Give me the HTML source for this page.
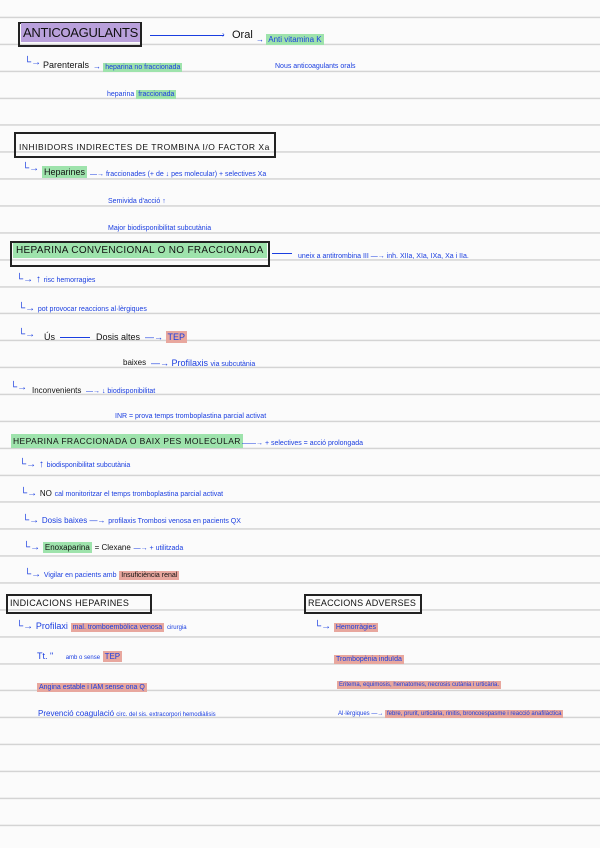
<!DOCTYPE html>
<html><head><meta charset="utf-8"><style>
body{margin:0;width:600px;height:848px;position:relative;overflow:hidden;background:#fbfbfb;
background-image:repeating-linear-gradient(to bottom,transparent 0,transparent 16px,#d4d4d4 16px,#d4d4d4 17.5px,transparent 17.5px,transparent 26.93px);
background-position:0 0.7px;font-family:"Liberation Sans",sans-serif}
.t{position:absolute;white-space:nowrap;line-height:1}
.b{color:#1a3ee0;font-size:8px}
.k{color:#111}
.g{background:#9ee3ac;padding:1px 2px}
.p{background:#b9a0db;padding:1px 2px}
.r{background:#e8a79e;padding:1px 2px}
.box{position:absolute;border:2px solid #222}
.ln{position:absolute;height:1px;background:#1a3ee0}
</style></head><body>

<div class="box" style="left:18px;top:22px;width:120px;height:21px"></div>
<div class="t k" style="left:21px;top:26px;font-size:13px;letter-spacing:-0.3px"><span class="p" style="padding:2px 2px">ANTICOAGULANTS</span></div>
<div class="ln" style="left:150px;top:35px;width:74px"></div><div class="t b" style="left:222px;top:31px">›</div>
<div class="t k" style="left:232px;top:30px;font-size:11px">Oral</div>
<div class="t b" style="left:256px;top:36px">→ <span class="g">Anti vitamina K</span></div>
<div class="t b" style="left:24px;top:58px;font-size:10px">└→</div>
<div class="t k" style="left:43px;top:61px;font-size:9px">Parenterals</div>
<div class="t b" style="left:93px;top:63px">→ <span class="g" style="font-size:7px">heparina no fraccionada</span></div>
<div class="t b" style="left:275px;top:63px;font-size:7px">Nous anticoagulants orals</div>
<div class="t b" style="left:107px;top:91px;font-size:7px">heparina <span class="g">fraccionada</span></div>

<div class="box" style="left:14px;top:132px;width:258px;height:22px"></div>
<div class="t k" style="left:19px;top:143px;font-size:8.5px;letter-spacing:0.5px">INHIBIDORS INDIRECTES DE TROMBINA I/O FACTOR Xa</div>
<div class="t b" style="left:22px;top:164px;font-size:10px">└→</div>
<div class="t k" style="left:42px;top:168px;font-size:9px"><span class="g">Heparines</span></div>
<div class="t b" style="left:90px;top:171px;font-size:7px">—→ fraccionades (+ de ↓ pes molecular) + selectives Xa</div>
<div class="t b" style="left:108px;top:198px;font-size:7px">Semivida d'acció ↑</div>
<div class="t b" style="left:108px;top:225px;font-size:7px">Major biodisponibilitat subcutània</div>

<div class="box" style="left:10px;top:241px;width:256px;height:22px"></div>
<div class="t k" style="left:13px;top:246px;font-size:10px;letter-spacing:0.3px"><span class="g" style="padding:2px 3px">HEPARINA CONVENCIONAL O NO FRACCIONADA</span></div>
<div class="ln" style="left:272px;top:253px;width:20px"></div>
<div class="t b" style="left:298px;top:253px;font-size:7px">uneix a antitrombina III —→ inh. XIIa, XIa, IXa, Xa i IIa.</div>
<div class="t b" style="left:16px;top:275px;font-size:10px">└→ ↑ <span style="font-size:7px">risc hemorragies</span></div>
<div class="t b" style="left:18px;top:304px;font-size:10px">└→ <span style="font-size:7px">pot provocar reaccions al·lèrgiques</span></div>
<div class="t b" style="left:18px;top:330px;font-size:10px">└→</div>
<div class="t k" style="left:44px;top:333px;font-size:9px">Ús</div>
<div class="ln" style="left:60px;top:337px;width:30px"></div>
<div class="t k" style="left:96px;top:333px;font-size:9px">Dosis altes</div>
<div class="t b" style="left:145px;top:333px;font-size:9px">—→ <span class="r">TEP</span></div>
<div class="t k" style="left:123px;top:359px;font-size:8px">baixes</div>
<div class="t b" style="left:151px;top:359px;font-size:9px">—→ Profilaxis <span style="font-size:7px">via subcutània</span></div>
<div class="t b" style="left:10px;top:383px;font-size:10px">└→</div>
<div class="t k" style="left:32px;top:387px;font-size:8px">Inconvenients</div>
<div class="t b" style="left:86px;top:388px;font-size:7px">—→ ↓ biodisponibilitat</div>
<div class="t b" style="left:115px;top:413px;font-size:7px">INR = prova temps tromboplastina parcial activat</div>

<div class="t k" style="left:11px;top:437px;font-size:8.5px;letter-spacing:0.4px"><span class="g" style="padding:2px 2px">HEPARINA FRACCIONADA O BAIX PES MOLECULAR</span></div>
<div class="t b" style="left:242px;top:440px;font-size:7px">——→ + selectives = acció prolongada</div>
<div class="t b" style="left:19px;top:460px;font-size:10px">└→ ↑ <span style="font-size:7px">biodisponibilitat subcutània</span></div>
<div class="t b" style="left:20px;top:489px;font-size:10px">└→ <span class="k" style="font-size:8px">NO</span> <span style="font-size:7px">cal monitoritzar el temps tromboplastina parcial activat</span></div>
<div class="t b" style="left:22px;top:516px;font-size:10px">└→ <span style="font-size:8px">Dosis baixes —→</span> <span style="font-size:7px">profilaxis Trombosi venosa en pacients QX</span></div>
<div class="t b" style="left:23px;top:543px;font-size:10px">└→ <span class="g k" style="font-size:8px">Enoxaparina</span> <span class="k" style="font-size:8px">= Clexane</span> <span style="font-size:7px">—→ + utilitzada</span></div>
<div class="t b" style="left:24px;top:570px;font-size:10px">└→ <span style="font-size:7px">Vigilar en pacients amb</span> <span class="r k" style="font-size:7px">Insuficiència renal</span></div>

<div class="box" style="left:6px;top:594px;width:142px;height:16px"></div>
<div class="t k" style="left:10px;top:599px;font-size:9px;letter-spacing:0.3px">INDICACIONS HEPARINES</div>
<div class="t b" style="left:16px;top:622px;font-size:10px">└→ <span style="font-size:9px">Profilaxi</span> <span class="r" style="font-size:7px">mal. tromboembòlica venosa</span> <span style="font-size:6px">cirurgia</span></div>
<div class="t b" style="left:37px;top:652px;font-size:9px">Tt. " <span style="font-size:6px">&nbsp;&nbsp;&nbsp;&nbsp;&nbsp;&nbsp;amb o sense</span> <span class="r" style="font-size:8px">TEP</span></div>
<div class="t b" style="left:37px;top:684px;font-size:7px"><span class="r">Angina estable i IAM sense ona Q</span></div>
<div class="t b" style="left:38px;top:710px;font-size:8px">Prevenció coagulació <span style="font-size:6px">circ. del sis. extracorpori hemodiàlisis</span></div>

<div class="box" style="left:304px;top:594px;width:114px;height:16px"></div>
<div class="t k" style="left:308px;top:599px;font-size:9px;letter-spacing:0.2px">REACCIONS ADVERSES</div>
<div class="t b" style="left:314px;top:622px;font-size:10px">└→ <span class="r" style="font-size:7px">Hemorràgies</span></div>
<div class="t b" style="left:334px;top:656px;font-size:7px"><span class="r">Trombopènia induïda</span></div>
<div class="t b" style="left:337px;top:682px;font-size:6px"><span class="r">Eritema, equimosis, hematomes, necrosis cutània i urticària.</span></div>
<div class="t b" style="left:338px;top:711px;font-size:6px">Al·lèrgiques —→ <span class="r">febre, prurit, urticària, rinitis, broncoespasme i reacció anafilàctica</span></div>
</body></html>
